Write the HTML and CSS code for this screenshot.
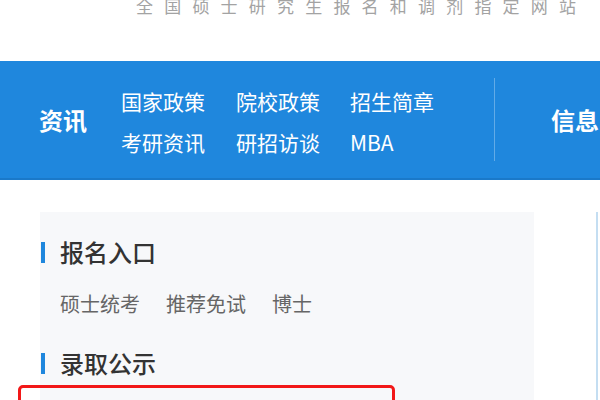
FILE: index.html
```html
<!DOCTYPE html>
<html lang="zh-CN">
<head>
<meta charset="utf-8">
<title>研招网</title>
<link rel="stylesheet" href="styles.css">
</head>
<body>
<div class="top">
  <div class="slogan">全国硕士研究生报名和调剂指定网站</div>
</div>
<nav class="nav">
  <div class="nav-title">资讯</div>
  <div class="links">
    <a>国家政策</a><a>院校政策</a><a>招生简章</a>
    <a>考研资讯</a><a>研招访谈</a><a>MBA</a>
  </div>
  <div class="divider"></div>
  <div class="nav-title2">信息</div>
</nav>
<div class="content">
  <div class="panel">
    <h2 class="heading">报名入口</h2>
    <div class="sublinks"><a>硕士统考</a><a>推荐免试</a><a>博士</a></div>
    <h2 class="heading heading-2">录取公示</h2>
  </div>
  <div class="side"></div>
  <div class="highlight"></div>
</div>
</body>
</html>
```
FILE: styles.css
```css
html, body {
  margin: 0;
  padding: 0;
  overflow: hidden;
  background: #fff;
  font-family: "Noto Sans CJK SC", "Noto Sans", sans-serif;
}
a { text-decoration: none; color: inherit; }
.top {
  height: 61px;
  padding-left: 136px;
  box-sizing: border-box;
}
.slogan {
  font-size: 17px;
  line-height: 11px;
  letter-spacing: 11.2px;
  color: #a3a3a3;
  white-space: nowrap;
}
.nav {
  height: 119px;
  box-sizing: border-box;
  background: #1f87dd;
  border-bottom: 2px solid #1a79c9;
  display: flex;
  align-items: center;
  padding-left: 39px;
  color: #fff;
  white-space: nowrap;
  overflow: hidden;
}
.nav-title, .nav-title2 {
  font-size: 24px;
  font-weight: bold;
  line-height: 24px;
  flex-shrink: 0;
}
.nav-title { width: 82px; }
.links {
  display: grid;
  grid-template-columns: 115px 114px 115px;
  row-gap: 20px;
  padding-top: 4px;
  font-size: 21px;
  line-height: 21px;
  flex-shrink: 0;
}
.divider {
  width: 1px;
  height: 83px;
  background: rgba(255,255,255,0.3);
  margin-left: 29px;
  flex-shrink: 0;
}
.nav-title2 { margin-left: 56px; }
.content {
  position: relative;
  display: flex;
  margin-top: 32px;
  padding-left: 40px;
}
.panel {
  width: 494px;
  height: 320px;
  flex-shrink: 0;
  background: #f7f8fa;
  padding: 28px 0 0 1px;
  box-sizing: border-box;
}
.heading {
  margin: 0;
  display: flex;
  align-items: center;
  font-size: 24px;
  line-height: 24px;
  font-weight: 500;
  color: #333;
}
.heading::before {
  content: "";
  width: 4px;
  height: 21px;
  background: #1f87dd;
  margin-right: 15px;
}
.heading-2 { margin-top: 37px; }
.sublinks {
  display: flex;
  gap: 26px;
  margin-top: 30px;
  padding-left: 19px;
  font-size: 20px;
  line-height: 20px;
  color: #666;
}
.side {
  margin-left: 62px;
  width: 100px;
  height: 320px;
  flex-shrink: 0;
  border-left: 2px solid #c4def2;
}
.highlight {
  position: absolute;
  left: 18px;
  top: 173px;
  width: 377px;
  height: 60px;
  box-sizing: border-box;
  border: 3px solid #f21818;
  border-radius: 5px;
}
```
